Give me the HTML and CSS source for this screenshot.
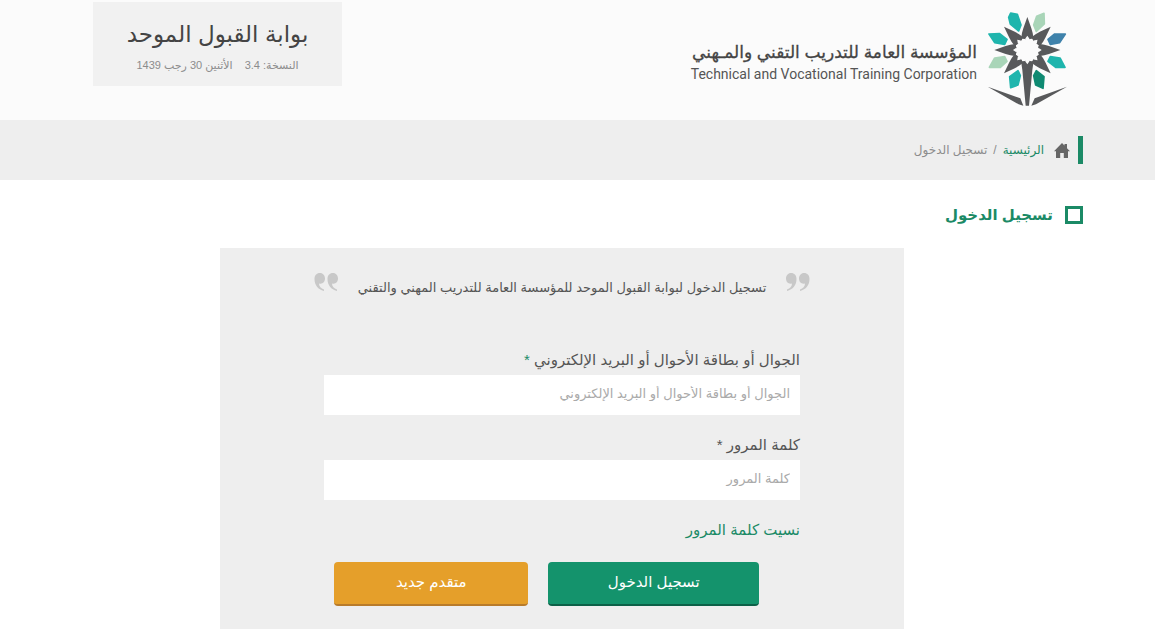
FILE: index.html
```html
<!DOCTYPE html>
<html lang="ar" dir="rtl">
<head>
    <meta charset="UTF-8">
    <meta name="viewport" content="width=device-width, initial-scale=1.0">
    <title>بوابة القبول الموحد</title>
    <link rel="stylesheet" href="styles.css">
</head>
<body>
    <header class="header">
        <div class="container header-row">
            <a class="brand" href="#">
                <svg class="brand-mark" viewBox="22 18 243 288" aria-hidden="true">
                    <g stroke-width="5" stroke-linejoin="round">
                        <path fill="#1fb5ad" stroke="#1fb5ad" d="M93 24L113 28 124 60 117 78 92 57 87 37ZM28 87L60 86 82 103 75 118 45 113ZM256 187L228 187 205 169 212 155 241 159ZM93 248L90 215 115 197 122 212 115 240Z"/>
                        <path fill="#a9d5b8" stroke="#a9d5b8" d="M193 25L194 57 170 79 162 60 171 34ZM29 187L45 159 75 155 82 169 62 187Z"/>
                        <path fill="#3f82ab" stroke="#3f82ab" d="M257 87L240 113 212 118 205 103 225 87Z"/>
                        <path fill="#0f8a72" stroke="#0f8a72" d="M190 250L168 240 162 212 170 197 193 215Z"/>
                    </g>
                    <g fill="#58595b">
                        <path id="ray" d="M143 36L155 70 159 84 163 109 157 100 150 102 143 92 136 102 129 100 123 109 127 84 131 70Z"/>
                        <use href="#ray" transform="rotate(45 143 135)"/>
                        <use href="#ray" transform="rotate(90 143 135)"/>
                        <use href="#ray" transform="rotate(135 143 135)"/>
                        <use href="#ray" transform="rotate(225 143 135)"/>
                        <use href="#ray" transform="rotate(270 143 135)"/>
                        <use href="#ray" transform="rotate(315 143 135)"/>
                        <path d="M143 178L150 168 157 170 163 161 158 195 148 302 138 302 128 195 123 161 129 170 136 168Z"/>
                        <path d="M24 245L122 280 131 302 117 298ZM262 245L165 280 155 302 169 298Z"/>
                    </g>
                </svg>
                <span class="brand-text">
                    <span class="brand-ar">المؤسسة العامة للتدريب التقني والمـهني</span>
                    <span class="brand-en" dir="ltr">Technical and Vocational Training Corporation</span>
                </span>
            </a>
            <div class="portal">
                <h1 class="portal-title">بوابة القبول الموحد</h1>
                <p class="portal-info"><span>النسخة: 3.4</span><span>الأثنين 30 رجب 1439</span></p>
            </div>
        </div>
    </header>

    <nav class="breadcrumb">
        <div class="container">
            <div class="crumbs">
                <svg class="home" viewBox="0 0 16 15" aria-hidden="true">
                    <path fill="#666" d="M8 0L10.5 2.6V1H13V5.2L16 8.2H14V15H9.8V10H6.2V15H2V8.2H0Z"/>
                </svg>
                <a class="crumb-link" href="#">الرئيسية</a>
                <span>/</span>
                <span>تسجيل الدخول</span>
            </div>
        </div>
    </nav>

    <main class="container">
        <h2 class="page-title">تسجيل الدخول</h2>

        <form class="card">
            <div class="quote">
                <svg class="quote-mark" viewBox="0 0 26 20" aria-hidden="true">
                    <path id="mark" fill="#c8c8c8" d="M6 1C9.500 1 11.500 3.500 11.500 7C11.500 13 8 17.500 2 19V17.500C5 16.500 7 14.500 7 11.500C3.500 12.500 1 10 1 6.500C1 3.500 3 1 6 1Z"/>
                    <use href="#mark" x="13"/>
                </svg>
                <p class="quote-text">تسجيل الدخول لبوابة القبول الموحد للمؤسسة العامة للتدريب المهني والتقني</p>
                <svg class="quote-mark" viewBox="0 0 26 20" aria-hidden="true">
                    <g transform="matrix(-1 0 0 1 26 0)">
                        <use href="#mark"/>
                        <use href="#mark" x="13"/>
                    </g>
                </svg>
            </div>

            <div class="fields">
                <label for="user">الجوال أو بطاقة الأحوال أو البريد الإلكتروني <span class="required">*</span></label>
                <input type="text" id="user" placeholder="الجوال أو بطاقة الأحوال أو البريد الإلكتروني">

                <label for="password">كلمة المرور <span>*</span></label>
                <input type="password" id="password" placeholder="كلمة المرور">

                <a class="forgot" href="#">نسيت كلمة المرور</a>

                <div class="actions">
                    <button type="submit" class="btn btn-login">تسجيل الدخول</button>
                    <button type="button" class="btn btn-new">متقدم جديد</button>
                </div>
            </div>
        </form>
    </main>
</body>
</html>
```
FILE: styles.css
```css
* {
    box-sizing: border-box;
}

body {
    margin: 0;
    font-family: "Liberation Sans", "DejaVu Sans", sans-serif;
    font-size: 14px;
    color: #555;
    background-color: #fff;
    overflow: hidden;
}

h1, h2, p {
    margin: 0;
    font-weight: normal;
}

a {
    text-decoration: none;
}

.container {
    margin: 0 72px;
}

/* Header */
.header {
    background-color: #fbfbfb;
    height: 120px;
}

.header-row {
    display: flex;
    justify-content: space-between;
    align-items: flex-start;
    padding: 0 15px 0 21px;
}

.brand {
    display: flex;
    align-items: center;
    gap: 10px;
    padding-top: 11px;
    color: #444;
}

.brand-mark {
    width: 81px;
    height: 96px;
}

.brand-text {
    display: flex;
    flex-direction: column;
    padding-top: 8px;
    white-space: nowrap;
}

.brand-ar {
    font-size: 17px;
    line-height: 22px;
    -webkit-text-stroke: 0.3px #444;
}

.brand-en {
    font-family: Roboto, sans-serif;
    font-size: 14px;
    line-height: 20px;
    color: #555;
}

.portal {
    width: 249px;
    height: 84px;
    margin-top: 2px;
    padding-top: 15px;
    text-align: center;
    background-color: #f1f1f1;
}

.portal-title {
    font-size: 23px;
    line-height: 34px;
    color: #444;
}

.portal-info {
    display: flex;
    justify-content: center;
    gap: 12px;
    font-size: 11px;
    line-height: 28px;
    color: #8c8c8c;
}

/* Breadcrumb */
.breadcrumb {
    background-color: #eee;
    height: 60px;
    padding-top: 16px;
}

.crumbs {
    display: flex;
    align-items: center;
    gap: 6px;
    height: 28px;
    padding-right: 8px;
    border-right: 5px solid #1b8a66;
    font-size: 12px;
    color: #8c8c8c;
}

.home {
    width: 16px;
    height: 15px;
    margin-left: 4px;
}

.crumb-link {
    color: #1b8a66;
}

/* Page title */
.page-title {
    display: flex;
    align-items: center;
    gap: 12px;
    height: 68px;
    padding-top: 2px;
    font-size: 15px;
    font-weight: bold;
    color: #1b8a66;
}

.page-title::before {
    content: "";
    box-sizing: border-box;
    width: 18px;
    height: 18px;
    border: 3px solid #1b8a66;
}

/* Login card */
.card {
    width: 684px;
    max-width: 100%;
    min-height: 400px;
    margin-right: 179px;
    padding: 24px 93px;
    background-color: #eee;
}

.quote {
    display: flex;
    justify-content: space-between;
    height: 76px;
}

.quote-mark {
    width: 26px;
    height: 20px;
}

.quote-text {
    font-size: 13px;
    line-height: 32px;
    white-space: nowrap;
}

.fields {
    padding: 0 11px;
}

.fields label {
    display: block;
    padding-bottom: 3px;
    font-size: 15px;
    line-height: 24px;
}

.fields .required {
    color: #1b8a66;
}

.fields input {
    display: block;
    width: 100%;
    height: 40px;
    margin-bottom: 18px;
    padding: 0 10px 4px;
    border: 0;
    font-family: inherit;
    font-size: 13px;
    background-color: #fff;
}

.fields input::placeholder {
    color: #aaa;
}

.forgot {
    display: block;
    padding-top: 1px;
    font-size: 15px;
    line-height: 22px;
    color: #1b8a66;
}

.actions {
    display: flex;
    gap: 20px;
    margin-top: 21px;
    padding: 0 41px 0 10px;
}

.btn {
    height: 44px;
    padding: 0 0 2px;
    border: 0;
    border-radius: 4px;
    font-family: inherit;
    font-size: 15px;
    color: #fff;
    cursor: pointer;
}

.btn-login {
    flex: 210;
    background-color: #14936c;
    border-bottom: 2px solid #0c6047;
}

.btn-new {
    flex: 194;
    background-color: #e59f2a;
    border-bottom: 2px solid #b87b2a;
}
```
